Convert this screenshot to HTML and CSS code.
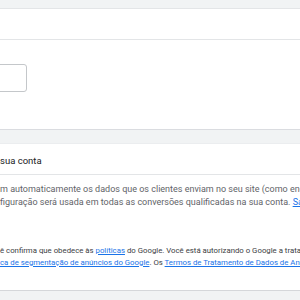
FILE: index.html
```html
<!DOCTYPE html>
<html>
<head>
<meta charset="utf-8">
<title>Conversões otimizadas</title>
<link rel="stylesheet" href="styles.css">
</head>
<body>
	<section class="panel">
		<div class="panel_head"></div>
		<div class="panel_body">
			<div class="field"></div>
		</div>
	</section>

	<section class="card">
		<div class="card_head">sua conta</div>
		<div class="card_body">
			<p class="desc">m automaticamente os dados que os clientes enviam no seu site (como endereços de e-mail)<br>figuração será usada em todas as conversões qualificadas na sua conta. <a href="#">Saiba mais</a></p>
			<p class="terms">ê confirma que obedece às <a href="#">políticas</a> do Google. Você está autorizando o Google a tratar<br><a href="#">ca de segmentação de anúncios do Google</a>. Os <a href="#">Termos de Tratamento de Dados de Anúncios</a></p>
		</div>
	</section>
</body>
</html>
```

FILE: styles.css
```css
html, body{ margin: 0; padding: 0;}
body{
	background: #f1f3f4;
	font-family: Roboto, "Liberation Sans", Arial, sans-serif;
	width: 300px;
	height: 300px;
	overflow: hidden;
	padding-top: 8px;
	box-sizing: border-box;
}

.panel{ background: #fff; border-top: 1px solid #e3e5e7; border-bottom: 1px solid #dadce0;}
.panel_head{ height: 30px; border-bottom: 1px solid #e3e5e7;}
.panel_body{ height: 89px; padding-top: 24px; box-sizing: border-box;}
.field{ width: 40px; height: 28px; margin-left: -13px; border: 1px solid #c4c7ca; border-radius: 3px; box-sizing: border-box;}

.card{ background: #fff; margin-top: 13px; border-top: 1px solid #ebedef; border-bottom: 1px solid #d5d7da;}
.card_head{ height: 30px; line-height: 33px; font-size: 9.5px; color: #202124; border-bottom: 1px solid #e3e5e7;}
.card_body{ height: 115px; padding-top: 8px; box-sizing: border-box;}

.desc{ margin: 0; font-size: 9px; line-height: 13px; color: #5f6368; white-space: nowrap;}
.terms{ margin: 36px 0 0; font-size: 7.8px; line-height: 12px; color: #3c4043; white-space: nowrap;}
a{ color: #1a73e8; text-decoration: underline;}
```
